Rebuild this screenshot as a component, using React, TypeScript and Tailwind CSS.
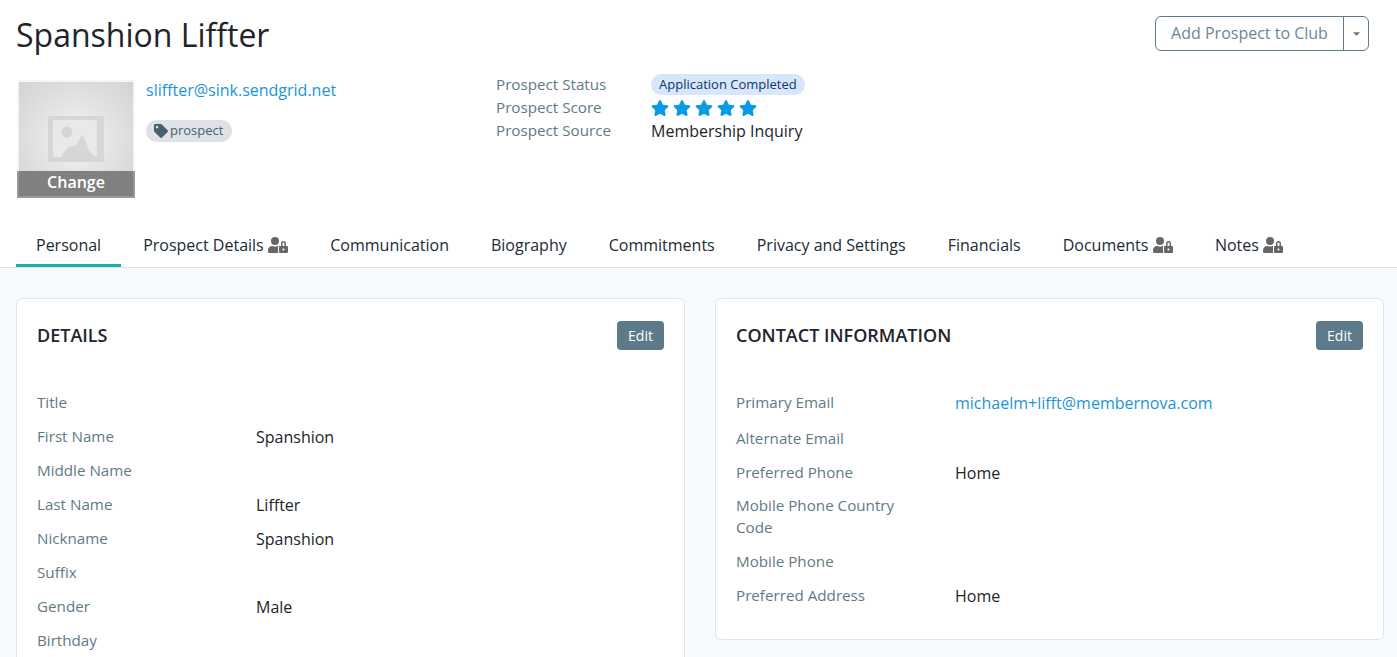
import { FaCaretDown, FaStar, FaTag, FaUserLock } from "react-icons/fa"

type Row = {
    label: string,
    value?: string,
    link?: boolean,
    tight?: boolean,
}

const detailRows: Row[] = [
    { label: "Title" },
    { label: "First Name", value: "Spanshion" },
    { label: "Middle Name" },
    { label: "Last Name", value: "Liffter" },
    { label: "Nickname", value: "Spanshion" },
    { label: "Suffix" },
    { label: "Gender", value: "Male" },
    { label: "Birthday" },
]

const contactRows: Row[] = [
    { label: "Primary Email", value: "michaelm+lifft@membernova.com", link: true },
    { label: "Alternate Email" },
    { label: "Preferred Phone", value: "Home", tight: true },
    { label: "Mobile Phone Country Code" },
    { label: "Mobile Phone" },
    { label: "Preferred Address", value: "Home" },
]

const tabs = [
    { name: "Personal", active: true },
    { name: "Prospect Details", locked: true },
    { name: "Communication" },
    { name: "Biography" },
    { name: "Commitments" },
    { name: "Privacy and Settings" },
    { name: "Financials" },
    { name: "Documents", locked: true },
    { name: "Notes", locked: true },
]

function Avatar() {
    return (
        <div className="relative ml-px w-[118px] h-[118px] border-2 border-[#f6f6f6] bg-[radial-gradient(circle,#e9e9e9_30%,#d2d2d2_100%)] flex justify-center">
            <svg width="56" height="46" viewBox="0 0 56 46" className="mt-[34px]">
                <path fillRule="evenodd" fill="#d6d6d6" d="M0 0h56v46H0zM5 4v37h44V4z" />
                <circle cx="19" cy="16" r="5.5" fill="#d6d6d6" />
                <path fill="#d6d6d6" d="M13 41c3-6 7-10 12-11 5-1 6-7 9-11 3 2 4 9 6 13 1 4 4 7 9 9z" />
            </svg>
            <div className="absolute left-[-2px] right-[-2px] bottom-[-2px] h-[27px] bg-[#808080] border-2 border-t-0 border-[#999] text-white text-[16px] font-semibold leading-[22px] text-center">
                Change
            </div>
        </div>
    )
}

function Header() {
    return (
        <div className="px-4 pt-[11px] pb-[31px] bg-white">
            <div className="flex justify-between items-start">
                <h1 className="text-[32px] leading-[48px] text-[#212529]">Spanshion Liffter</h1>
                <div className="flex h-[35px] mt-[5px] mr-3 border border-[#5c7a89] rounded-md text-[#6b8795]">
                    <div className="w-[188px] text-center text-[16px] leading-[33px] border-r border-[#5c7a89]">Add Prospect to Club</div>
                    <div className="w-[24px] flex items-center justify-center">
                        <FaCaretDown size={11} className="text-[#5c7a89]" />
                    </div>
                </div>
            </div>
            <div className="flex mt-[21px] h-[117px]">
                <Avatar />
                <div className="w-[350px] ml-[11px]">
                    <a className="block text-[16px] leading-[20px] text-[#1b95d8]">sliffter@sink.sendgrid.net</a>
                    <span className="inline-flex items-center gap-[2px] mt-[20px] h-[22px] pl-2 pr-[9px] rounded-full bg-[#dee2e6] text-[13px] text-[#495f6b]">
                        <FaTag size={14} className="text-[#495f6b]" />
                        prospect
                    </span>
                </div>
                <div className="text-[15.2px] leading-[23px] text-[#5f7a85] w-[155px] mt-[-7px]">
                    <div>Prospect Status</div>
                    <div>Prospect Score</div>
                    <div>Prospect Source</div>
                </div>
                <div className="mt-[-9px]">
                    <div className="inline-block h-[21px] px-2 rounded-full bg-[#d7e6fa] text-[13px] leading-[20px] text-[#12356e]">Application Completed</div>
                    <div className="flex gap-[4px] h-[24px] items-center mt-px">
                        {[1, 2, 3, 4, 5].map(n => <FaStar key={n} size={18} className="text-[#0a9be6]" />)}
                    </div>
                    <div className="text-[16px] leading-[22px] text-[#212529]">Membership Inquiry</div>
                </div>
            </div>
        </div>
    )
}

function TabBar() {
    return (
        <div className="flex px-4 h-[40px] bg-white border-b border-[#d8e3ec] gap-[2px]">
            {tabs.map(tab =>
                <div key={tab.name} className={`flex items-center gap-[4.5px] px-5 h-[39px] pb-[3px] text-[16px] text-[#212b36] border-b-[3px] ${tab.active ? "border-[#17b3a6]" : "border-transparent"}`}>
                    {tab.name}
                    {tab.locked && <FaUserLock size={20} className="w-[20px] h-[16px] text-[#666]" />}
                </div>
            )}
        </div>
    )
}

function InfoRow({ row }: { row: Row }) {
    return (
        <div className={`flex ${row.link ? "mb-[14px]" : row.tight ? "mb-[11px]" : "mb-3"}`}>
            <div className="w-[219px] pr-8 text-[15.2px] leading-[22px] text-[#5f7a85]">{row.label}</div>
            {row.value && <div className={`text-[16px] leading-[20px] pt-[2px] ${row.link ? "text-[#1b95d8]" : "text-[#212529]"}`}>{row.value}</div>}
        </div>
    )
}

function Card(props: { title: string, rows: Row[], className: string }) {
    return (
        <div className={`bg-white border border-[#dbe6ef] rounded-md px-5 ${props.className}`}>
            <div className="flex justify-between items-center mt-[22px] mb-[41px]">
                <h2 className="text-[18px] leading-[29px] font-semibold text-[#212529]">{props.title}</h2>
                <button className="w-[47px] h-[29px] rounded bg-[#5c7a89] text-white text-[14px]">Edit</button>
            </div>
            {props.rows.map(row => <InfoRow key={row.label} row={row} />)}
        </div>
    )
}

export default function App() {
    return (
        <div className="h-[657px] overflow-hidden bg-[#f7fbfe] font-['Open_Sans',sans-serif]">
            <Header />
            <TabBar />
            <div className="flex items-start gap-[30px] px-4 pt-[30px]">
                <Card title="DETAILS" rows={detailRows} className="w-[669px] shrink-0" />
                <Card title="CONTACT INFORMATION" rows={contactRows} className="w-[669px] shrink-0 pb-[21px]" />
            </div>
        </div>
    )
}
